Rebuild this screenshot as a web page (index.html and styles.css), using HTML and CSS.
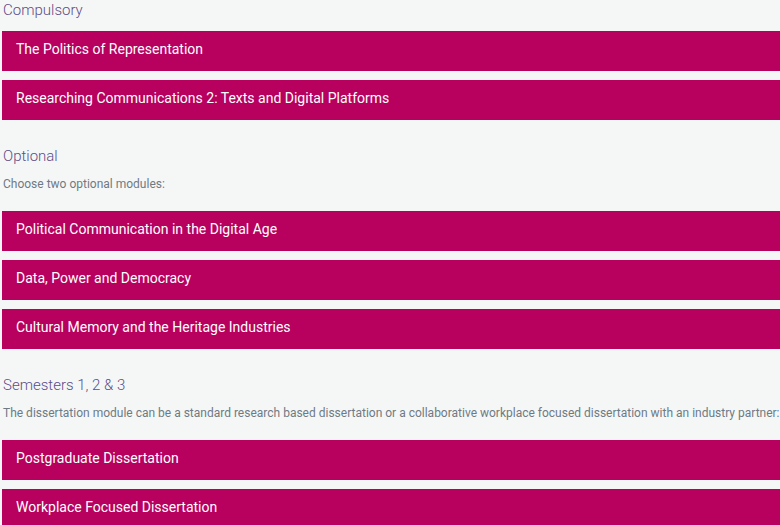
FILE: index.html
```html
<!DOCTYPE html>
<html lang="en">

<head>
    <meta charset="UTF-8">
    <meta name="viewport" content="width=device-width, initial-scale=1.0">
    <title>Course modules</title>
    <link rel="stylesheet" href="styles.css">
</head>

<body>
    <div class="modules">
        <section class="group">
            <h3 class="group-title">Compulsory</h3>
            <ul class="module-list">
                <li class="module">The Politics of Representation</li>
                <li class="module">Researching Communications 2: Texts and Digital Platforms</li>
            </ul>
        </section>

        <section class="group">
            <h3 class="group-title">Optional</h3>
            <p class="group-note">Choose two optional modules:</p>
            <ul class="module-list">
                <li class="module">Political Communication in the Digital Age</li>
                <li class="module">Data, Power and Democracy</li>
                <li class="module">Cultural Memory and the Heritage Industries</li>
            </ul>
        </section>

        <section class="group">
            <h3 class="group-title">Semesters 1, 2 &amp; 3</h3>
            <p class="group-note">The dissertation module can be a standard research based dissertation or a collaborative workplace focused dissertation with an industry partner:</p>
            <ul class="module-list">
                <li class="module">Postgraduate Dissertation</li>
                <li class="module">Workplace Focused Dissertation</li>
            </ul>
        </section>
    </div>
</body>

</html>
```

FILE: styles.css
```css
body {
    margin: 0;
    background-color: #f5f7f7;
    font-family: Roboto, "Liberation Sans", sans-serif;
}

.modules {
    margin-left: 2px;
    padding-top: 1px;
}

.group {
    margin-bottom: 27px;
}

.group-title {
    margin: 0 0 11px 1px;
    font-size: 15px;
    font-weight: 300;
    line-height: 19px;
    color: #5c4d88;
}

.group-note {
    margin: 0 0 20px 1px;
    font-size: 12px;
    line-height: 14px;
    color: #6f7a84;
}

.module-list {
    list-style: none;
    margin: 0;
    padding: 0;
}

.module {
    height: 40px;
    line-height: 36px;
    padding: 0 14px;
    margin-bottom: 9px;
    background-color: #b8005f;
    color: #fff;
    font-size: 14px;
    box-sizing: border-box;
}
```
